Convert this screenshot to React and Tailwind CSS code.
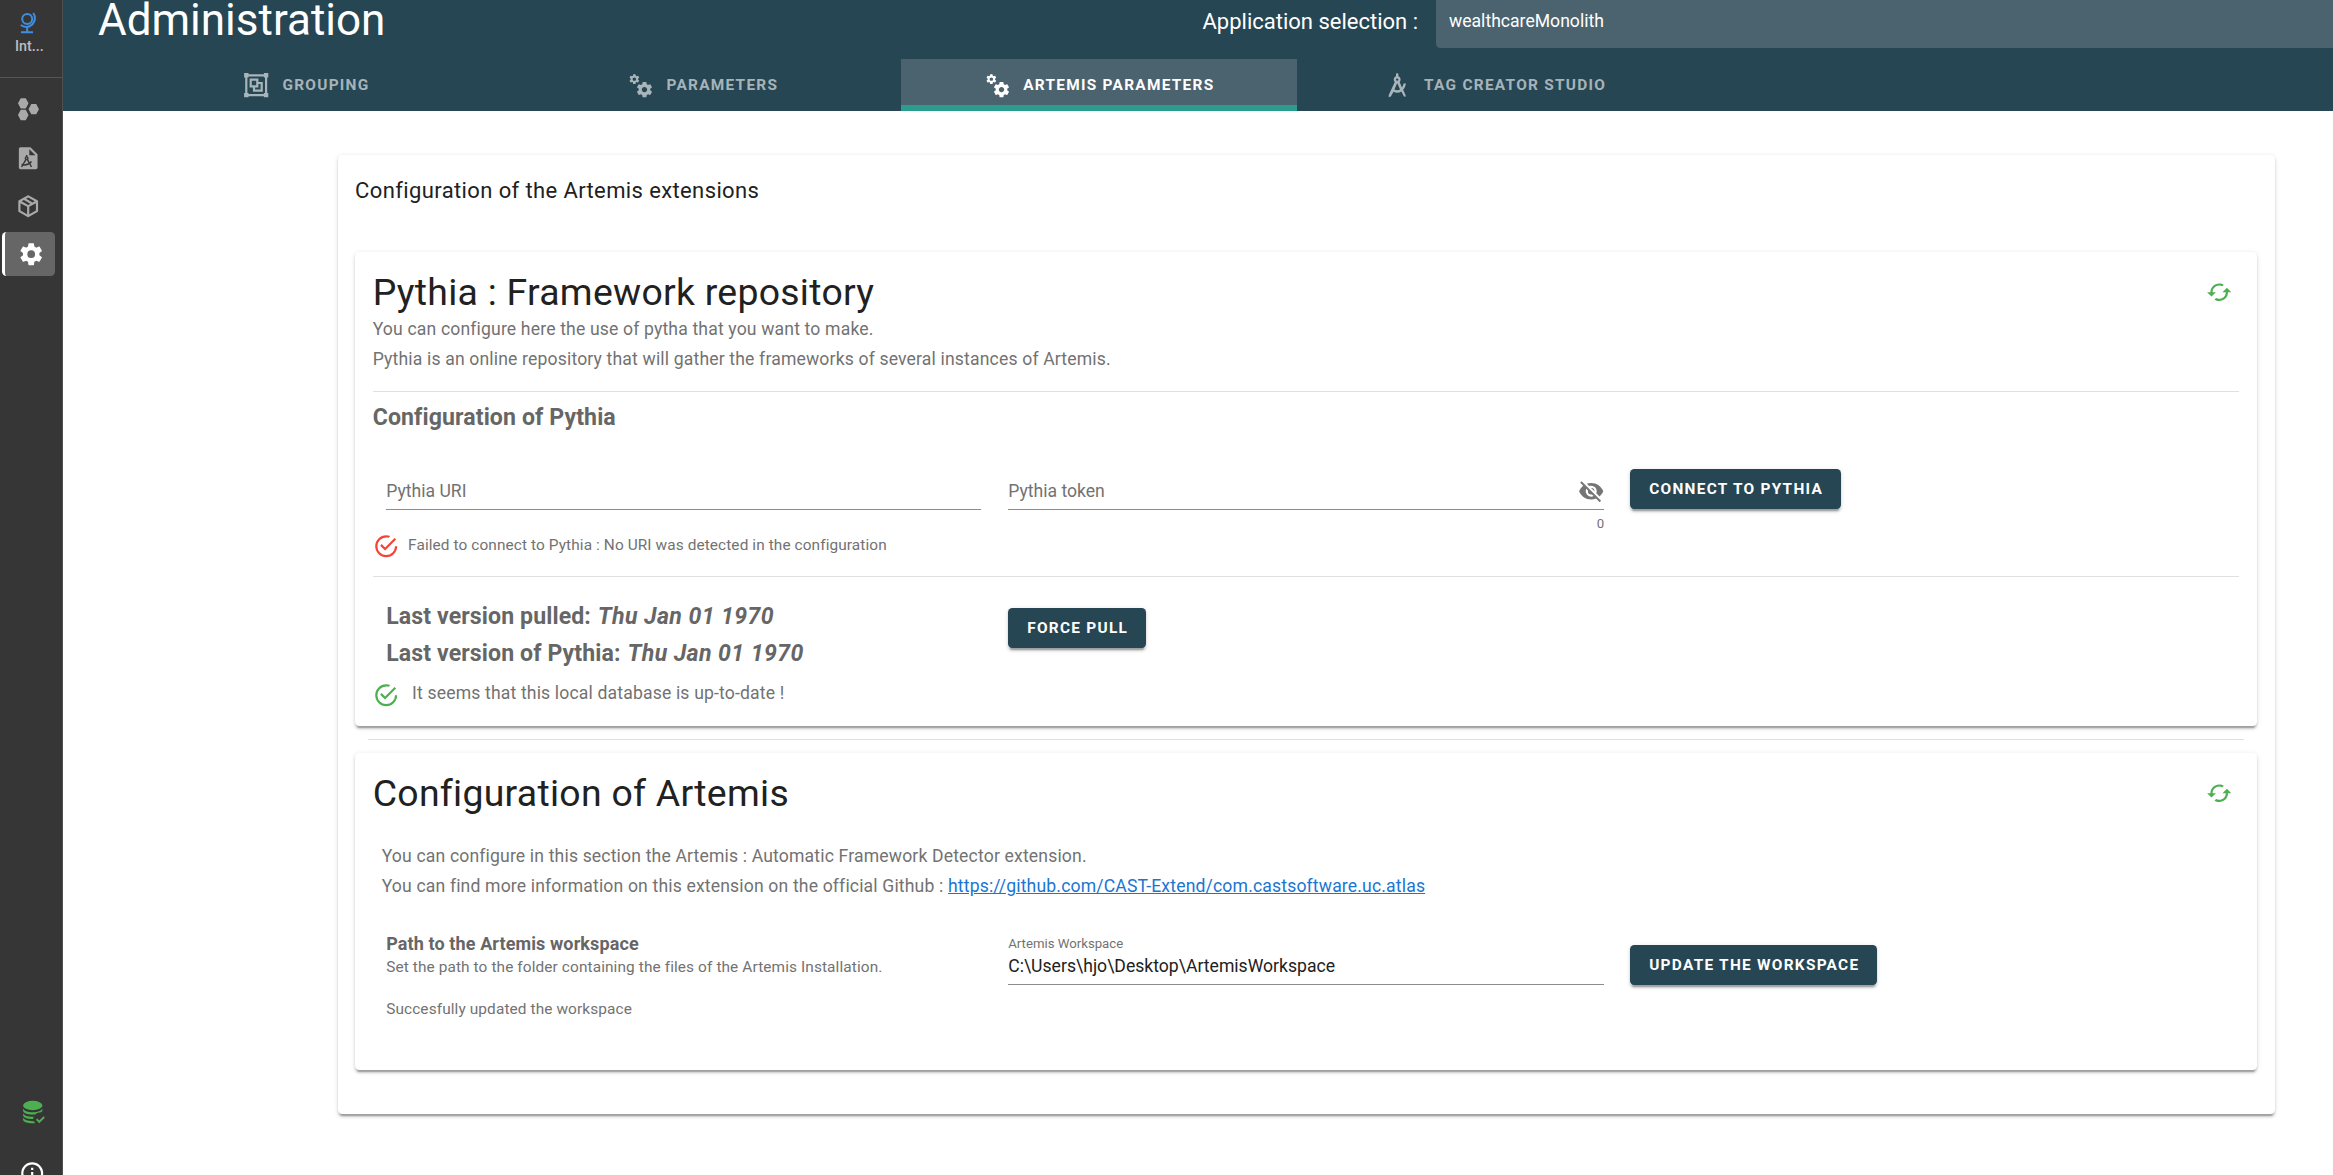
import React from "react";

const paths = {
  group:
    "M1,1V5H2V19H1V23H5V22H19V23H23V19H22V5H23V1H19V2H5V1M5,4H19V5H20V19H19V20H5V19H4V5H5M6,6V14H9V18H18V9H14V6M8,8H12V12H8M14,11H16V16H11V14H14",
  cogs: "M15.9,18.45C17.25,18.45 18.35,17.35 18.35,16C18.35,14.65 17.25,13.55 15.9,13.55C14.54,13.55 13.45,14.65 13.45,16C13.45,17.35 14.54,18.45 15.9,18.45M21.1,16.68L22.58,17.84C22.71,17.95 22.75,18.13 22.66,18.29L21.26,20.71C21.17,20.86 21,20.92 20.83,20.86L19.09,20.16C18.73,20.44 18.33,20.67 17.91,20.85L17.64,22.7C17.62,22.87 17.47,23 17.3,23H14.5C14.32,23 14.18,22.87 14.15,22.7L13.89,20.85C13.46,20.67 13.07,20.44 12.71,20.16L10.96,20.86C10.81,20.92 10.62,20.86 10.54,20.71L9.14,18.29C9.05,18.13 9.09,17.95 9.22,17.84L10.7,16.68L10.65,16L10.7,15.31L9.22,14.16C9.09,14.05 9.05,13.86 9.14,13.71L10.54,11.29C10.62,11.13 10.81,11.07 10.96,11.13L12.71,11.84C13.07,11.56 13.46,11.32 13.89,11.15L14.15,9.29C14.18,9.13 14.32,9 14.5,9H17.3C17.47,9 17.62,9.13 17.64,9.29L17.91,11.15C18.33,11.32 18.73,11.56 19.09,11.84L20.83,11.13C21,11.07 21.17,11.13 21.26,11.29L22.66,13.71C22.75,13.86 22.71,14.05 22.58,14.16L21.1,15.31L21.15,16L21.1,16.68M6.69,8.07C7.56,8.07 8.26,7.37 8.26,6.5C8.26,5.63 7.56,4.92 6.69,4.92C5.82,4.92 5.12,5.63 5.12,6.5C5.12,7.37 5.82,8.07 6.69,8.07M10.03,6.94L11,7.68C11.07,7.75 11.09,7.87 11.03,7.97L10.13,9.53C10.08,9.63 9.96,9.67 9.86,9.63L8.74,9.18L8,9.62L7.81,10.81C7.79,10.92 7.7,11 7.59,11H5.79C5.67,11 5.58,10.92 5.56,10.81L5.4,9.62L4.64,9.18L3.5,9.63C3.41,9.67 3.3,9.63 3.24,9.53L2.34,7.97C2.28,7.87 2.31,7.75 2.39,7.68L3.34,6.94L3.31,6.5L3.34,6.06L2.39,5.32C2.31,5.25 2.28,5.13 2.34,5.03L3.24,3.47C3.3,3.37 3.41,3.33 3.5,3.37L4.63,3.82L5.4,3.38L5.56,2.19C5.58,2.08 5.67,2 5.79,2H7.59C7.7,2 7.79,2.08 7.81,2.19L8,3.38L8.74,3.82L9.86,3.37C9.96,3.33 10.08,3.37 10.13,3.47L11.03,5.03C11.09,5.13 11.07,5.25 11,5.32L10.03,6.06L10.06,6.5L10.03,6.94Z",
  cog: "M12,15.5A3.5,3.5 0 0,1 8.5,12A3.5,3.5 0 0,1 12,8.5A3.5,3.5 0 0,1 15.5,12A3.5,3.5 0 0,1 12,15.5M19.43,12.97C19.47,12.65 19.5,12.33 19.5,12C19.5,11.67 19.47,11.34 19.43,11L21.54,9.37C21.73,9.22 21.78,8.95 21.66,8.73L19.66,5.27C19.54,5.05 19.27,4.96 19.05,5.05L16.56,6.05C16.04,5.66 15.5,5.32 14.87,5.07L14.5,2.42C14.46,2.18 14.25,2 14,2H10C9.75,2 9.54,2.18 9.5,2.42L9.13,5.07C8.5,5.32 7.96,5.66 7.44,6.05L4.95,5.05C4.73,4.96 4.46,5.05 4.34,5.27L2.34,8.73C2.21,8.95 2.27,9.22 2.46,9.37L4.57,11C4.53,11.34 4.5,11.67 4.5,12C4.5,12.33 4.53,12.65 4.57,12.97L2.46,14.63C2.27,14.78 2.21,15.05 2.34,15.27L4.34,18.73C4.46,18.95 4.73,19.03 4.95,18.95L7.44,17.94C7.96,18.34 8.5,18.68 9.13,18.93L9.5,21.58C9.54,21.82 9.75,22 10,22H14C14.25,22 14.46,21.82 14.5,21.58L14.87,18.93C15.5,18.67 16.04,18.34 16.56,17.94L19.05,18.95C19.27,19.03 19.54,18.95 19.66,18.73L21.66,15.27C21.78,15.05 21.73,14.78 21.54,14.63L19.43,12.97Z",
  check:
    "M20,12A8,8 0 0,1 12,20A8,8 0 0,1 4,12A8,8 0 0,1 12,4C12.76,4 13.5,4.11 14.2,4.31L15.77,2.74C14.61,2.26 13.34,2 12,2A10,10 0 0,0 2,12A10,10 0 0,0 12,22A10,10 0 0,0 22,12M7.91,10.08L6.5,11.5L11,16L21,6L19.59,4.58L11,13.17L7.91,10.08Z",
  eyeOff:
    "M11.83,9L15,12.16C15,12.11 15,12.05 15,12A3,3 0 0,0 12,9C11.94,9 11.89,9 11.83,9M7.53,9.8L9.08,11.35C9.03,11.56 9,11.77 9,12A3,3 0 0,0 12,15C12.22,15 12.44,14.97 12.65,14.92L14.2,16.47C13.53,16.8 12.79,17 12,17A5,5 0 0,1 7,12C7,11.21 7.2,10.47 7.53,9.8M2,4.27L4.28,6.55L4.73,7C3.08,8.3 1.78,10 1,12C2.73,16.39 7,19.5 12,19.5C13.55,19.5 15.03,19.2 16.38,18.66L16.81,19.08L19.73,22L21,20.73L3.27,3M12,7A5,5 0 0,1 17,12C17,12.64 16.87,13.26 16.64,13.82L19.57,16.75C21.07,15.5 22.27,13.86 23,12C21.27,7.61 17,4.5 12,4.5C10.6,4.5 9.26,4.75 8,5.2L10.17,7.35C10.74,7.13 11.35,7 12,7Z",
  package:
    "M21,16.5C21,16.88 20.79,17.21 20.47,17.38L12.57,21.82C12.41,21.94 12.21,22 12,22C11.79,22 11.59,21.94 11.43,21.82L3.53,17.38C3.21,17.21 3,16.88 3,16.5V7.5C3,7.12 3.21,6.79 3.53,6.62L11.43,2.18C11.59,2.06 11.79,2 12,2C12.21,2 12.41,2.06 12.57,2.18L20.47,6.62C20.79,6.79 21,7.12 21,7.5V16.5M12,4.15L10.11,5.22L16,8.61L17.96,7.5L12,4.15M6.04,7.5L12,10.85L13.96,9.75L8.08,6.35L6.04,7.5M5,15.91L11,19.29V12.58L5,9.21V15.91M19,15.91V9.21L13,12.58V19.29L19,15.91Z",
  hexagons:
    "M5.2,2H9.8L12.3,6.7L9.8,11.4H5.2L2.7,6.7ZM5.2,12.6H9.8L12.3,17.3L9.8,22H5.2L2.7,17.3ZM14.8,7.3H19.3L21.8,12L19.3,16.7H14.8L12.3,12Z",
  cached:
    "M19 8l-4 4h3c0 3.31-2.69 6-6 6-1.01 0-1.97-.25-2.8-.7l-1.46 1.46C8.97 19.54 10.43 20 12 20c4.42 0 8-3.58 8-8h3l-4-4zM6 12c0-3.31 2.69-6 6-6 1.01 0 1.97.25 2.8.7l1.46-1.46C15.03 4.46 13.57 4 12 4c-4.42 0-8 3.58-8 8H1l4 4 4-4H6z",
  info: "M11,9H13V7H11M12,20C7.59,20 4,16.41 4,12C4,7.59 7.59,4 12,4C16.41,4 20,7.59 20,12C20,16.41 16.41,20 12,20M12,2A10,10 0 0,0 2,12A10,10 0 0,0 12,22A10,10 0 0,0 22,12A10,10 0 0,0 12,2M11,17H13V11H11V17Z",
};

function Svg({ children, className = "" }) {
  return (
    <svg viewBox="0 0 24 24" fill="currentColor" className={"block size-[26.4px] shrink-0 " + className}>
      {children}
    </svg>
  );
}

function Icon({ name, className }) {
  return (
    <Svg className={className}>
      <path d={paths[name]} fillRule="evenodd" />
    </Svg>
  );
}

function Compass({ className }) {
  return (
    <Svg className={className}>
      <path
        fillRule="evenodd"
        d="M12,1.2C12.7,1.2 13.1,1.7 13.1,2.3V3.9C14.4,4.4 15.1,5.5 15.1,6.8C15.1,7.7 14.8,8.5 14.2,9.1L16.3,14C17,13 17.6,11.8 17.9,10.5H20C19.6,12.8 18.7,14.700 17.400,16.200L19.700,21.200L19.400,22.800L18,22L15.800,17.700C14.700,18.400 13.400,18.800 12,18.800C10.800,18.800 9.700,18.500 8.700,18L6.200,22.300L4.300,22.900V21L9.800,9.100C9.200,8.500 8.900,7.700 8.900,6.800C8.900,5.500 9.600,4.400 10.900,3.900V2.300C10.900,1.700 11.300,1.200 12,1.200M12,5.800A1.100,1.100 0 0,0 12,8A1.100,1.100 0 0,0 12,5.800M11.800,10.500L9.500,15.900C10.200,16.400 11.100,16.600 12,16.600C13,16.600 13.900,16.400 14.600,15.900L12.200,10.500Z"
      />
    </Svg>
  );
}

function GlobeStand() {
  return (
    <svg viewBox="0 0 18 22" fill="none" stroke="#3f8ee0" className="block h-[22px] w-[18px]">
      <circle cx="7.2" cy="7" r="5" strokeWidth="2" />
      <path d="M13.2 1A8.700 8.700 0 0 1 .8 13" strokeWidth="2" />
      <path d="M7.200 15.500V20M1 20.200H13" strokeWidth="2" />
    </svg>
  );
}

function FileCompass() {
  return (
    <Svg>
      <path d="M5.500,2H14L20.500,8.500V20.500A1.500,1.500 0 0,1 19,22H5A1.500,1.500 0 0,1 3.500,20.500V3.500A1.500,1.500 0 0,1 5,2Z" />
      <path d="M13,3.800V9.300H18.600Z" fill="#363636" />
      <g fill="none" stroke="#363636" strokeWidth="1.300">
        <path d="M10.600,9V11M10,13L6,20M11.200,13L15,20M6,17.700C9,18.700 12.500,18 15,15" />
        <circle cx="10.600" cy="12" r="1.200" />
      </g>
    </Svg>
  );
}

function DatabaseCheck() {
  return (
    <Svg className="text-[#4caf50]">
      <ellipse cx="12.500" cy="6.800" rx="8.800" ry="4.300" />
      <path d="M3.700,9.500C4.500,11.700 8,13 12.500,13S20.500,11.700 21.300,9.500V11.500C20.900,12.300 20.200,12.900 19.200,13.300C17.400,13.300 16,13.900 14.800,14.900C14.100,15 13.300,15.100 12.500,15.100C7.600,15.100 3.700,13.600 3.700,11.600Z" />
      <path d="M3.700,13.800C4.500,15.800 7.800,17.100 12.500,17.100H13.300C13,17.800 12.900,18.500 13,19.200H12.500C7.600,19.200 3.700,17.800 3.700,15.800Z" />
      <path d="M3.700,17.800C4.500,19.800 7.800,21.100 12.500,21.100H13.600L14.600,22.900H12.500C7.600,22.900 3.700,21.500 3.700,19.700Z" />
      <path d="M18.400,22.900L15.400,19.800L16.600,18.600L18.400,20.400L22.300,16.500L23.500,17.900Z" />
    </Svg>
  );
}

const tabs = [
  { label: "GROUPING", icon: <Icon name="group" /> },
  { label: "PARAMETERS", icon: <Icon name="cogs" /> },
  { label: "ARTEMIS PARAMETERS", icon: <Icon name="cogs" />, active: true },
  { label: "TAG CREATOR STUDIO", icon: <Compass /> },
];

const elevation =
  "rounded-[4.4px] bg-white shadow-[0_3.3px_1.1px_-2.2px_rgba(0,0,0,0.2),0_2.2px_2.2px_0_rgba(0,0,0,0.14),0_1.1px_5.5px_0_rgba(0,0,0,0.12)]";

function Button({ children, className = "" }) {
  return (
    <button
      className={
        "h-[40px] rounded-[4.4px] bg-[#264653] pt-[2px] pr-[17.6px] pl-[19px] text-[15.4px] font-bold tracking-[0.083em] whitespace-nowrap text-white shadow-[0_3.3px_1.1px_-2.2px_rgba(0,0,0,0.2),0_2.2px_2.2px_0_rgba(0,0,0,0.14),0_1.1px_5.5px_0_rgba(0,0,0,0.12)] " +
        className
      }
    >
      {children}
    </button>
  );
}

function CardTitle({ children }) {
  return (
    <div className="flex items-center justify-between pr-[6.500px]">
      <h2 className="text-[37.4px] leading-[44px] tracking-[0.00735em] text-[#212121]">{children}</h2>
      <Icon name="cached" className="text-[#4caf50]" />
    </div>
  );
}

function Sidebar() {
  return (
    <aside className="flex w-[63px] shrink-0 flex-col border-r border-[#505050] bg-[#363636] text-[#a9a9a9]">
      <div className="flex h-[78px] flex-col border-b border-[#555] pt-[12px]">
        <div className="pl-[20px]">
          <GlobeStand />
        </div>
        <span className="pt-[1px] pl-[15px] text-[14.3px] leading-[22px] font-medium text-[#bdbdbd]">Int...</span>
      </div>
      <nav className="flex flex-col pt-[18px]">
        <div className="mb-[22.500px] pl-[15px]">
          <Icon name="hexagons" />
        </div>
        <div className="mb-[22px] pl-[15px]">
          <FileCompass />
        </div>
        <div className="mb-[12.400px] pl-[15px]">
          <Icon name="package" />
        </div>
        <div className="ml-[2px] flex h-[44px] w-[53px] items-center rounded-[4.4px] border-l-[3px] border-white bg-[#666] pt-[1px] pl-[13px] text-white">
          <Icon name="cog" />
        </div>
      </nav>
      <div className="mt-auto flex h-[77px] flex-col gap-[36px] overflow-hidden pl-[19px]">
        <DatabaseCheck />
        <Icon name="info" className="text-white" />
      </div>
    </aside>
  );
}

function Header() {
  return (
    <header className="flex h-[111px] flex-col bg-[#264653] text-white">
      <div className="flex h-[59px] items-start justify-between pl-[35px]">
        <h1 className="text-[44px] leading-[40px]">Administration</h1>
        <div className="flex">
          <span className="mr-[18px] text-[22px] leading-[43px]">Application selection :</span>
          <div className="h-[48px] w-[897px] rounded-bl-[4.4px] bg-[#4b636f] pl-[13px] text-[17.6px] leading-[42px]">
            wealthcareMonolith
          </div>
        </div>
      </div>
      <div className="flex h-[52px] pl-[45px]">
        {tabs.map((t) => (
          <div
            key={t.label}
            className={
              "flex w-[396.4px] items-center justify-center gap-[13.2px] text-[15.4px] font-bold tracking-[0.083em] " +
              (t.active ? "bg-[#4b636f] text-white shadow-[inset_0_-6px_0_#2a9d8f]" : "text-white/60")
            }
          >
            {t.icon}
            <span className="pt-[2px]">{t.label}</span>
          </div>
        ))}
      </div>
    </header>
  );
}

function PythiaCard() {
  return (
    <section className={"h-[474px] px-[17.6px] pt-[18px] text-[#727272] " + elevation}>
      <CardTitle>Pythia : Framework repository</CardTitle>
      <div className="text-[17.6px] leading-[30.300px] tracking-[0.0088em]">
        <p>You can configure here the use of pytha that you want to make.</p>
        <p>Pythia is an online repository that will gather the frameworks of several instances of Artemis.</p>
      </div>
      <hr className="mt-[16.400px] border-[#e0e0e0]" />
      <h3 className="h-[50px] text-[23.1px] leading-[52px] font-bold tracking-[0.11px] text-[#666]">
        Configuration of Pythia
      </h3>
      <div className="flex h-[90px] px-[13.500px]">
        <div className="w-[595px] pt-[32px]">
          <div className="border-b border-[#8c8c8c] pb-[1px] text-[17.6px] leading-[34px]">Pythia URI</div>
        </div>
        <div className="ml-[27px] w-[596px] pt-[32px]">
          <div className="flex items-center justify-between border-b border-[#8c8c8c] pb-[1px] text-[17.6px] leading-[34px]">
            Pythia token
            <Icon name="eyeOff" className="text-[#757575]" />
          </div>
          <div className="pt-[5px] text-right text-[13.2px] leading-[17px]">0</div>
        </div>
        <Button className="mt-[27px] ml-[26px]">CONNECT TO PYTHIA</Button>
      </div>
      <div className="flex h-[28px] items-center">
        <Icon name="check" className="text-[#f44336]" />
        <span className="pb-[1px] pl-[9px] text-[15.4px] tracking-[0.1px]">
          Failed to connect to Pythia : No URI was detected in the configuration
        </span>
      </div>
      <hr className="mt-[16px] border-[#e0e0e0]" />
      <div className="flex px-[13.500px] pt-[20px]">
        <div className="w-[622px] pt-[1px] text-[23.1px] leading-[37px] font-bold tracking-[0.11px] text-[#666]">
          <p>
            Last version pulled: <em className="ml-[1px] tracking-[0.4px]">Thu Jan 01 1970</em>
          </p>
          <p>
            Last version of Pythia: <em className="ml-[1px] tracking-[0.4px]">Thu Jan 01 1970</em>
          </p>
        </div>
        <Button className="mt-[11px]">FORCE PULL</Button>
      </div>
      <div className="mt-[9px] flex h-[28px] items-center">
        <Icon name="check" className="text-[#4caf50]" />
        <span className="pb-[4px] pl-[13px] text-[17.6px] tracking-[0.0088em]">
          It seems that this local database is up-to-date !
        </span>
      </div>
    </section>
  );
}

function ArtemisCard() {
  return (
    <section className={"h-[317px] px-[17.6px] pt-[18px] text-[#727272] " + elevation}>
      <CardTitle>Configuration of Artemis</CardTitle>
      <div className="mt-[26px] pl-[9px] text-[17.6px] leading-[30.300px] tracking-[0.0088em]">
        <p>You can configure in this section the Artemis : Automatic Framework Detector extension.</p>
        <p>
          You can find more information on this extension on the official Github :{" "}
          <a className="text-[#1976d2] underline">https://github.com/CAST-Extend/com.castsoftware.uc.atlas</a>
        </p>
      </div>
      <div className="flex px-[13.500px] pt-[29.400px]">
        <div className="w-[622px] tracking-[0.11px]">
          <h4 className="text-[18px] leading-[25px] font-bold text-[#666]">Path to the Artemis workspace</h4>
          <p className="text-[15.4px] leading-[23px]">
            Set the path to the folder containing the files of the Artemis Installation.
          </p>
          <p className="mt-[19px] text-[15.4px] leading-[23px]">Succesfully updated the workspace</p>
        </div>
        <div className="w-[596px] pt-[4.500px]">
          <p className="text-[13.2px] leading-[18px]">Artemis Workspace</p>
          <p className="border-b border-[#8c8c8c] pb-[4px] text-[17.6px] leading-[27px] text-[#212121]">
            C:\Users\hjo\Desktop\ArtemisWorkspace
          </p>
        </div>
        <Button className="mt-[14px] ml-[26px]">UPDATE THE WORKSPACE</Button>
      </div>
    </section>
  );
}

export default function App() {
  return (
    <div className="flex h-[1175px] w-[2333px] overflow-hidden bg-white font-[Roboto,sans-serif]">
      <Sidebar />
      <div className="flex min-w-0 flex-1 flex-col">
        <Header />
        <main className="pt-[44px] pl-[274.500px]">
          <div className={"h-[959px] w-[1937px] px-[17.6px] pt-[17.6px] " + elevation}>
            <h2 className="h-[79.400px] text-[22px] leading-[35.200px] tracking-[0.0174em] text-[#212121]">
              Configuration of the Artemis extensions
            </h2>
            <PythiaCard />
            <hr className="mx-[13.200px] my-[13px] border-[#e0e0e0]" />
            <ArtemisCard />
          </div>
        </main>
      </div>
    </div>
  );
}
